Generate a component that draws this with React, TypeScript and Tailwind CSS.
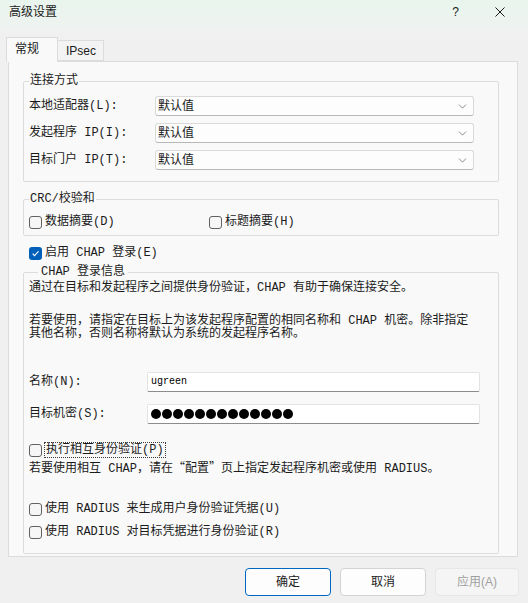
import { ChevronDown } from "lucide-react";

// SimSun-like mix: mono Latin, CJK from Noto
const sim = "font-['Liberation_Mono','Noto_Sans_CJK_SC',monospace]";
const ui = "font-['Liberation_Sans','Noto_Sans_CJK_SC',sans-serif]";

function Check({ on }: { on?: boolean }) {
  if (on) {
    return (
      <span className="flex h-[13px] w-[13px] shrink-0 items-center justify-center rounded-[3px] bg-[#005fb8]">
        <svg width="9" height="9" viewBox="0 0 9 9">
          <path d="M1.6 4.7 3.5 6.6 7.5 2.4" fill="none" stroke="white" strokeWidth="1.1" />
        </svg>
      </span>
    );
  }
  return <span className="h-[13px] w-[13px] shrink-0 rounded-[3px] border border-[#616161] bg-[#f6f6f6]" />;
}

function CheckRow({ label, on, className = "" }: { label: string; on?: boolean; className?: string }) {
  return (
    <div className={`flex h-[16px] items-center gap-[3px] leading-[16px] ${className}`}>
      <Check on={on} />
      <span>{label}</span>
    </div>
  );
}

function Select() {
  return (
    <div className="flex h-[20px] w-[319px] items-center justify-between rounded-[3px] border border-[#dadada] border-b-[#b8b8b8] bg-[#fdfdfd] pl-[2px] pr-[4px]">
      <span className={`${ui} text-[12px] leading-[16px]`}>默认值</span>
      <ChevronDown size={13} strokeWidth={1.3} color="#5c5c5c" />
    </div>
  );
}

function Field({ children }: { children: React.ReactNode }) {
  return (
    <div className="flex h-[20px] w-[333px] items-center rounded-[2px] border border-[#e3e3e3] border-b-[#8c8c8c] bg-white pl-[3px]">
      {children}
    </div>
  );
}

const selectRows = ["本地适配器(L):", "发起程序 IP(I):", "目标门户 IP(T):"];

export default function App() {
  return (
    <div className={`flex h-[603px] w-[528px] flex-col overflow-hidden bg-[#f0f0f0] text-[12px] text-[#1b1b1b] ${sim}`}>
      <div className="bg-[linear-gradient(to_bottom,#e8f5ed_0px,#eef3f0_26px,#f0f0f0_36px)]">
        <div className={`flex h-[24px] items-center pl-[9px] pr-[23px] ${ui}`}>
          <span className="leading-[16px]">高级设置</span>
          <div className="ml-auto flex items-center gap-[36px]">
            <span className="text-[12px] leading-[16px]">?</span>
            <svg width="10" height="10" viewBox="0 0 10 10">
              <path d="M0.5 0.5 9.5 9.5M9.5 0.5 0.5 9.5" stroke="#1b1b1b" strokeWidth="1" />
            </svg>
          </div>
        </div>
        <div className={`flex items-end pl-[6px] pt-[13px] ${ui}`}>
          <div className="relative z-10 -mb-px flex h-[25px] w-[52px] items-center border-x border-t border-[#dcdcdc] bg-[#f9f9f9] pb-[2px] pl-[8px]">
            常规
          </div>
          <div className="flex h-[21px] w-[46px] items-center border-y border-r border-[#dcdcdc] bg-[#f3f3f3] pl-[8px]">
            IPsec
          </div>
        </div>
      </div>

      <div className="ml-[8px] h-[496px] w-[510px] border border-[#dcdcdc] bg-[#f9f9f9] pl-[14px] pr-[18px] pt-[11px]">
        <fieldset className="rounded-[2px] border border-[#dcdcdc] px-[5px] pb-[11px] pt-[7px]">
          <legend className="px-[1px] leading-[16px]">连接方式</legend>
          <div className="flex flex-col gap-[7px]">
            {selectRows.map((label) => (
              <div key={label} className="flex h-[20px] items-center">
                <span className="w-[126px] leading-[16px]">{label}</span>
                <Select />
              </div>
            ))}
          </div>
        </fieldset>

        <fieldset className="mt-[9px] rounded-[2px] border border-[#dcdcdc] px-[5px] pb-[5px] pt-[7px]">
          <legend className="px-[1px] leading-[16px]">CRC/校验和</legend>
          <div className="flex">
            <CheckRow label="数据摘要(D)" className="w-[180px]" />
            <CheckRow label="标题摘要(H)" />
          </div>
        </fieldset>

        <CheckRow label="启用 CHAP 登录(E)" on className="ml-[6px] mt-[9px]" />

        <fieldset className="mt-[3px] rounded-[2px] border border-[#dcdcdc] px-[5px] pb-[13px] pt-[2px]">
          <legend className="ml-[9px] px-[3px] leading-[16px]">CHAP 登录信息</legend>
          <p className="leading-[13px]">通过在目标和发起程序之间提供身份验证，CHAP 有助于确保连接安全。</p>
          <p className="mt-[20px] leading-[13px]">
            若要使用，请指定在目标上为该发起程序配置的相同名称和 CHAP 机密。除非指定
            <br />
            其他名称，否则名称将默认为系统的发起程序名称。
          </p>

          <div className="mt-[31px] flex h-[20px] items-center">
            <span className="w-[118px] leading-[16px]">名称(N):</span>
            <Field>
              <span className="font-['Liberation_Mono',monospace] text-[10px] leading-[14px] text-black">ugreen</span>
            </Field>
          </div>
          <div className="mt-[12px] flex h-[20px] items-center">
            <span className="w-[118px] leading-[16px]">目标机密(S):</span>
            <Field>
              <div className="flex gap-[1px]">
                {Array.from({ length: 13 }).map((_, i) => (
                  <span key={i} className="h-[10px] w-[10px] rounded-full bg-black" />
                ))}
              </div>
            </Field>
          </div>

          <div className="mt-[18px] flex h-[16px] items-center gap-[2px]">
            <Check />
            <span className="border border-dotted border-[#3a3a3a] pl-px pr-[1px] leading-[14px]">执行相互身份验证(P)</span>
          </div>
          <p className="mt-[2px] leading-[14px]">
            若要使用相互 CHAP，请在<span className="font-['Noto_Sans_CJK_SC',sans-serif]">“配置”</span>页上指定发起程序机密或使用 RADIUS。
          </p>

          <CheckRow label="使用 RADIUS 来生成用户身份验证凭据(U)" className="mt-[25px]" />
          <CheckRow label="使用 RADIUS 对目标凭据进行身份验证(R)" className="mt-[7px]" />
        </fieldset>
      </div>

      <div className={`mt-[11px] flex justify-end gap-[9px] pr-[9px] ${ui}`}>
        <button className="h-[28px] w-[86px] rounded-[4px] border border-[#0067c0] bg-[#fdfdfd] leading-[16px]">确定</button>
        <button className="h-[28px] w-[86px] rounded-[4px] border border-[#d3d3d3] bg-[#fdfdfd] leading-[16px]">取消</button>
        <button className="h-[28px] w-[84px] rounded-[4px] border border-[#e6e6e6] bg-[#f5f5f5] leading-[16px] text-[#a0a0a0]">应用(A)</button>
      </div>
    </div>
  );
}
